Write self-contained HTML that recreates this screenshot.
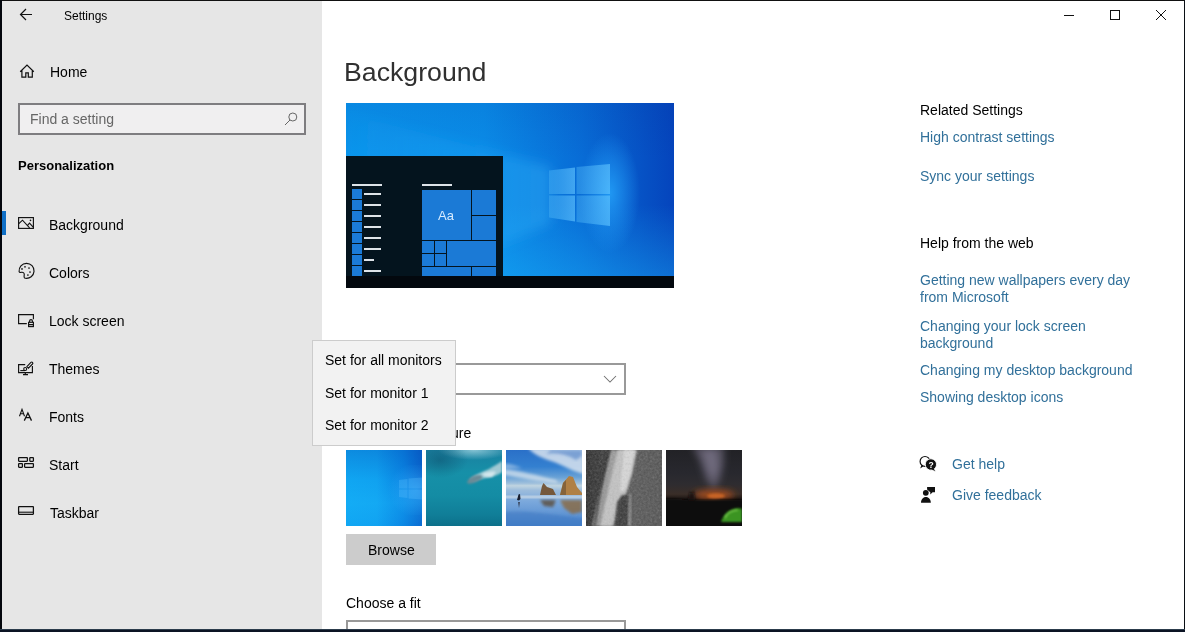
<!DOCTYPE html>
<html><head><meta charset="utf-8">
<style>
*{margin:0;padding:0;box-sizing:border-box}
html,body{width:1185px;height:632px;overflow:hidden;background:#fff}
body{position:relative;will-change:transform;font-family:"Liberation Sans",sans-serif;font-size:14px;color:#000}
.a{position:absolute}
.t{position:absolute;white-space:nowrap;line-height:20px;font-size:14px}
.lnk{color:#31709a}
svg{position:absolute;overflow:visible}
</style></head><body>
<!-- frame -->
<div class="a" style="left:0;top:0;width:1185px;height:632px;background:#fff"></div>
<!-- sidebar -->
<div class="a" style="left:2px;top:0;width:320px;height:632px;background:#e6e6e6"></div>

<!-- back arrow -->
<svg style="left:0;top:0" width="40" height="30"><path d="M20.5 14.5H32M26 9l-5.5 5.5L26 20" fill="none" stroke="#111" stroke-width="1.2"/></svg>
<div class="t" style="left:64px;top:6px;font-size:12px">Settings</div>

<!-- home -->
<svg style="left:0;top:0" width="40" height="90"><path d="M20.2 71.8L27 65.1L33.8 71.8M21.9 70.2V77.1H25.8V72.8H28.3V77.1H32.3V70.2" fill="none" stroke="#111" stroke-width="1.2"/></svg>
<div class="t" style="left:50px;top:62px">Home</div>

<!-- search -->
<div class="a" style="left:18px;top:103px;width:288px;height:32px;border:2px solid #7e7d80;background:#f0eff0"></div>
<div class="t" style="left:30px;top:109px;color:#666">Find a setting</div>
<svg style="left:0;top:0" width="320" height="140"><circle cx="292.8" cy="117" r="4" fill="none" stroke="#666" stroke-width="1"/><path d="M290 120L285 125" stroke="#666" stroke-width="1"/></svg>

<div class="t" style="left:18px;top:156px;font-size:13px;font-weight:bold">Personalization</div>

<!-- nav -->
<div class="a" style="left:2px;top:211px;width:4px;height:24px;background:#0f6fc6"></div>
<div class="t" style="left:49px;top:215px">Background</div>
<div class="t" style="left:49px;top:263px">Colors</div>
<div class="t" style="left:49px;top:311px">Lock screen</div>
<div class="t" style="left:49px;top:359px">Themes</div>
<div class="t" style="left:49px;top:407px">Fonts</div>
<div class="t" style="left:49px;top:455px">Start</div>
<div class="t" style="left:50px;top:503px">Taskbar</div>

<svg style="left:0;top:0" width="40" height="632" fill="none" stroke="#111" stroke-width="1.15">
 <rect x="18.6" y="217.6" width="14.8" height="10.8"/>
 <path d="M18.8 223.6L22.5 220.2L29.6 227.8M27.4 225.6L29.5 223.2L33.2 227.2"/>
 <circle cx="30.5" cy="220.4" r="0.8" fill="#111" stroke="none"/>
 <path d="M19.1 271.6A7.5 7.5 0 1 1 25.3 278.2C24.2 278.2 23.9 276.8 24.2 275.2C24.6 273.4 23.6 272.1 21.6 272.3C20.6 272.4 19.4 273 19.1 271.6Z"/>
 <g fill="#111" stroke="none"><circle cx="25" cy="266.8" r="0.85"/><circle cx="29" cy="268" r="0.85"/><circle cx="22" cy="268.9" r="0.85"/><circle cx="30" cy="272" r="0.85"/><circle cx="27.9" cy="275" r="0.85"/></g>
 <path d="M26.8 323.6H18.6V314.6H33.4V319.2"/>
 <rect x="28.6" y="322.3" width="4.8" height="4.3"/>
 <path d="M29.6 322.3V321A1.4 1.4 0 0 1 32.4 321V322.3M28.6 324.6H33.4"/>
 <path d="M25.2 364.6H18.6V372.6H32.4V366M25.3 372.6V374.6M23 374.6H28"/>
 <path d="M26.9 366.6L30.9 362.4A1.1 1.1 0 0 1 32.5 364L28.4 368.1Z" stroke-width="1.1"/>
 <circle cx="25.2" cy="369" r="1.5" stroke-width="1.1"/><path d="M20.3 370.6H25.2" stroke-width="1.1"/>
 <path d="M19.5 416.3L22 409.4L24.5 416.3M20.6 413.8H23.4" stroke-width="1.1"/>
 <path d="M24.3 420.6L27.9 413L31.5 420.6M25.7 417.6H30.1" stroke-width="1.3"/>
 <rect x="18.6" y="457.6" width="8.8" height="3.7" rx="0.5" stroke-width="1.25"/>
 <rect x="29.8" y="457.6" width="3.6" height="3.7" rx="0.5" stroke-width="1.25"/>
 <rect x="18.6" y="463.6" width="3.8" height="3.7" rx="0.5" stroke-width="1.25"/>
 <rect x="24.6" y="463.6" width="8.8" height="3.7" rx="0.5" stroke-width="1.25"/>
 <rect x="18.6" y="506.6" width="14.8" height="7.7" rx="0.5" stroke-width="1.25"/>
 <path d="M18.6 512.2H33.4" stroke-width="1.1"/>
</svg>
<svg style="left:0;top:0" width="1185" height="632">
 <circle cx="925" cy="461.4" r="4.9" fill="none" stroke="#111" stroke-width="1.2"/>
 <path d="M921.6 464.6L920.2 468.6L923.6 466.2Z" fill="#111"/>
 <path d="M925.3 464.3A5.6 5.6 0 1 1 934.4 468.8L936 472L931.9 470.1A5.6 5.6 0 0 1 925.3 464.3Z" fill="#111" stroke="#fff" stroke-width="0.9"/>
 <text x="931" y="468" font-family="Liberation Sans" font-weight="bold" font-size="8.5" fill="#fff" text-anchor="middle">?</text>
 <circle cx="925.8" cy="492.8" r="2.9" fill="#111"/>
 <path d="M921 502.8C921 499.5 923 497 925.9 497C928.8 497 930.8 499.5 930.8 502.8Z" fill="#111"/>
 <path d="M927.1 487H935V492.3H932.6L930.3 494.6V492.3L927.1 489.4Z" fill="#111"/>
</svg>

<!-- main title -->
<div class="a" style="left:344px;top:54px;font-size:26.7px;line-height:36px;white-space:nowrap;color:#303030">Background</div>

<!-- preview -->
<div class="a" id="prev" style="left:346px;top:103px;width:328px;height:185px;overflow:hidden;background:linear-gradient(90deg,#0a94ec 0%,#0a8ce8 42%,#086cd6 72%,#0544bc 100%)">
 <div class="a" style="left:0;top:0;width:328px;height:185px;background:linear-gradient(180deg,rgba(0,40,140,0.10) 0%,rgba(0,40,140,0) 30%,rgba(30,190,255,0) 55%,rgba(30,190,255,0.4) 100%)"></div>
 <div class="a" style="left:0;top:0;width:328px;height:185px;background:radial-gradient(ellipse 30px 60px at 264px 90px,rgba(40,170,255,0.75),rgba(40,170,255,0) 100%)"></div>
 <svg style="left:0;top:0" width="328" height="185">
  <defs>
   <linearGradient id="beam2" x1="0" x2="1" y1="0" y2="0"><stop offset="0" stop-color="#30b8ff" stop-opacity="0.05"/><stop offset="0.6" stop-color="#30b8ff" stop-opacity="0.18"/><stop offset="1" stop-color="#40c0ff" stop-opacity="0.35"/></linearGradient>
   <linearGradient id="lg" x1="0" x2="1" y1="0" y2="0"><stop offset="0" stop-color="#48b0f4" stop-opacity="0.45"/><stop offset="1" stop-color="#60c4ff" stop-opacity="0.65"/></linearGradient>
   <filter id="bl"><feGaussianBlur stdDeviation="6"/></filter>
  </defs>
  <polygon points="205,64 205,120 60,185 0,185 0,10" fill="url(#beam2)" filter="url(#bl)"/>
  <polygon points="203,67.5 229,64.5 229,91 203,91" fill="url(#lg)"/>
  <polygon points="230.5,64 264,61 264,91 230.5,91" fill="url(#lg)"/>
  <polygon points="203,92.5 229,92.5 229,118.5 203,114.5" fill="url(#lg)"/>
  <polygon points="230.5,92.5 264,92.5 264,123 230.5,119" fill="url(#lg)"/>
 </svg>
 <!-- start menu -->
 <div class="a" style="left:0;top:53px;width:157px;height:132px;background:#04141e"></div>
 <div class="a" style="left:6px;top:81px;width:30px;height:2px;background:#dde3e8"></div>
 <div class="a" style="left:76px;top:81px;width:30px;height:2px;background:#dde3e8"></div>
 <div class="a" style="left:6px;top:86px;width:10px;height:87px;background:repeating-linear-gradient(180deg,#1b7ad6 0,#1b7ad6 10px,#04141e 10px,#04141e 11px)"></div>
 <div class="a" style="left:18px;top:90px;width:17px;height:2px;background:#dde3e8;box-shadow:0 11px 0 #dde3e8,0 22px 0 #dde3e8,0 33px 0 #dde3e8,0 44px 0 #dde3e8,0 55px 0 #dde3e8,0 77px 0 #dde3e8"></div>
 <div class="a" style="left:18px;top:156px;width:10px;height:2px;background:#dde3e8"></div>
 <!-- tiles -->
 <div class="a" style="left:76px;top:87px;width:74px;height:86px;background:#04141e"></div>
 <div class="a" style="left:76px;top:87px;width:49px;height:50px;background:#1b7ad6"></div>
 <div class="a" style="left:126px;top:87px;width:24px;height:25px;background:#1b7ad6"></div>
 <div class="a" style="left:126px;top:113px;width:24px;height:24px;background:#1b7ad6"></div>
 <div class="a" style="left:76px;top:138px;width:12px;height:12px;background:#1b7ad6"></div>
 <div class="a" style="left:89px;top:138px;width:11px;height:12px;background:#1b7ad6"></div>
 <div class="a" style="left:76px;top:151px;width:12px;height:12px;background:#1b7ad6"></div>
 <div class="a" style="left:89px;top:151px;width:11px;height:12px;background:#1b7ad6"></div>
 <div class="a" style="left:101px;top:138px;width:49px;height:25px;background:#1b7ad6"></div>
 <div class="a" style="left:76px;top:164px;width:49px;height:9px;background:#1b7ad6"></div>
 <div class="a" style="left:126px;top:164px;width:24px;height:9px;background:#1b7ad6"></div>
 <div class="a" style="left:92px;top:105px;font-size:13px;line-height:16px;color:#d8ecff">Aa</div>
 <!-- taskbar -->
 <div class="a" style="left:0;top:173px;width:328px;height:12px;background:#03080e"></div>
</div>

<!-- dropdown -->
<div class="a" style="left:346px;top:363px;width:280px;height:32px;border:2px solid #999"></div>
<svg style="left:0;top:0" width="640" height="400"><path d="M604 376l6 6 6-6" fill="none" stroke="#707070" stroke-width="1.05"/></svg>

<div class="t" style="left:346px;top:423px">Choose your picture</div>

<!-- thumbs -->
<div class="a" style="left:346px;top:450px;width:76px;height:76px;overflow:hidden;background:linear-gradient(90deg,#10a6f2 0%,#10a2f0 40%,#0a84e2 75%,#0a64cc 100%)">
 <div class="a" style="left:0;top:0;width:76px;height:76px;background:linear-gradient(180deg,rgba(0,60,170,0.25) 0%,rgba(0,60,170,0) 40%,rgba(30,190,255,0.25) 70%,rgba(20,170,250,0.1) 100%)"></div>
 <div class="a" style="left:40px;top:15px;width:50px;height:50px;background:radial-gradient(circle at 30px 25px,rgba(60,180,255,0.5),rgba(60,180,255,0) 70%)"></div>
 <svg style="left:0;top:0" width="76" height="76"><g fill="#5cc0ff" fill-opacity="0.3"><polygon points="53,30 61.5,29 61.5,38.5 53,38.5"/><polygon points="62.5,28.6 76,27.6 76,38.5 62.5,38.5"/><polygon points="53,39.5 61.5,39.5 61.5,48 53,47"/><polygon points="62.5,39.5 76,39.5 76,49.5 62.5,48.4"/></g></svg>
</div>
<div class="a" style="left:426px;top:450px;width:76px;height:76px;overflow:hidden;background:linear-gradient(180deg,#1a80a0 0%,#1690a8 30%,#148ca4 60%,#107e98 85%,#0c708a 100%)">
 <div class="a" style="left:0;top:0;width:76px;height:76px;background:radial-gradient(ellipse 36px 10px at 48px 0px,rgba(190,230,238,0.65),rgba(190,230,238,0) 100%)"></div>
 <div class="a" style="left:0;top:0;width:76px;height:76px;background:radial-gradient(ellipse 28px 18px at 14px 10px,rgba(8,60,90,0.4),rgba(8,60,90,0) 100%)"></div>
 <svg style="left:0;top:0" width="76" height="76"><defs><filter id="b2" x="-20%" y="-20%" width="140%" height="140%"><feGaussianBlur stdDeviation="1.3"/></filter></defs>
  <path d="M44 30C48 25 56 22 63 19C68 16 73 13 76 11V22C71 26 62 28 54 29C50 30 47 32 44 30Z" fill="#c0d8de" fill-opacity="0.8" filter="url(#b2)"/>
  <path d="M41 33C42 28 47 25 53 25C57 25 58 28 54 30C50 32 45 35 41 33Z" fill="#6a8a96" filter="url(#b2)"/>
  <path d="M56 24C60 22 66 21 70 22L66 27C62 27 58 27 56 24Z" fill="#e8f4f6" fill-opacity="0.7" filter="url(#b2)"/>
 </svg>
</div>
<div class="a" style="left:506px;top:450px;width:76px;height:76px;overflow:hidden;background:linear-gradient(180deg,#2a70c8 0%,#3480d0 22%,#6aa2d6 36%,#a0c0dc 44%,#c0d4e0 47%,#9cbcdc 53%,#7aa8dc 68%,#4a84cc 100%)">
 <svg style="left:0;top:0" width="76" height="76"><defs><filter id="b3" x="-20%" y="-20%" width="140%" height="140%"><feGaussianBlur stdDeviation="1.8"/></filter><filter id="b3s"><feGaussianBlur stdDeviation="0.6"/></filter></defs>
  <path d="M22 -2H78V24C68 22 58 16 48 12C38 9 28 5 22 -2Z" fill="#e4eaf0" fill-opacity="0.8" filter="url(#b3)"/>
  <path d="M40 4C50 2 60 4 70 10L76 6V0H45Z" fill="#3a70c0" fill-opacity="0.5" filter="url(#b3)"/>
  <path d="M-2 19C15 21 30 25 50 30L52 33C30 31 15 28 -2 25Z" fill="#e0e8f0" fill-opacity="0.7" filter="url(#b3)"/>
  <path d="M-2 14C4 13 10 16 16 18L-2 19Z" fill="#d0e0f0" fill-opacity="0.5" filter="url(#b3)"/>
  <path d="M34 45L36 36L37.5 33L41 37L47 39L50 45Z" fill="#74583a" filter="url(#b3s)"/>
  <path d="M54 45L57 33L63 26L67 27L71 37L76 43V45ZM58 45C59.5 42 61 42 62 45Z" fill="#b08044" filter="url(#b3s)"/><path d="M54 45L57 33L60 30L60 45Z" fill="#6a5034" fill-opacity="0.6" filter="url(#b3s)"/>
  <path d="M34 50L50 50L47 57L38 56Z" fill="#5a4a3a" fill-opacity="0.8" filter="url(#b3)"/>
  <path d="M54 50L76 50L76 62L66 64L58 58Z" fill="#8a6840" fill-opacity="0.8" filter="url(#b3)"/>
  <path d="M0 45.5H76V48.5H0Z" fill="#d8e2ea" fill-opacity="0.55" filter="url(#b3s)"/>
  <path d="M12.5 44.5L14 44L14.5 49L13 50.5L11 50Z" fill="#1a2030"/>
  <path d="M12 52L14 52L13 58Z" fill="#2a3040" fill-opacity="0.8"/>
  <path d="M-2 62C20 60 40 64 78 68V78H-2Z" fill="#3a74c0" fill-opacity="0.5" filter="url(#b3)"/>
 </svg>
</div>
<div class="a" style="left:586px;top:450px;width:76px;height:76px;overflow:hidden;background:linear-gradient(90deg,#2a2a2a 0%,#333 20%,#444 45%,#555 60%,#505050 100%)">
 <svg style="left:0;top:0" width="76" height="76"><defs><filter id="b4" x="-10%" y="-10%" width="120%" height="120%"><feGaussianBlur stdDeviation="0.9"/></filter>
  <filter id="n4" x="0" y="0" width="100%" height="100%"><feTurbulence type="fractalNoise" baseFrequency="0.45" numOctaves="2" seed="5"/><feColorMatrix type="saturate" values="0"/><feComponentTransfer><feFuncA type="table" tableValues="0 0.3"/></feComponentTransfer></filter></defs>
  <path d="M25 0H51L46 25L40 45L33 60L28 76H6L12 50L20 20Z" fill="#9a9a9a" filter="url(#b4)"/>
  <path d="M32 0H50L45 25L39 44L31 58L26 76H14L20 50L27 20Z" fill="#c2c2c2" filter="url(#b4)"/>
  <path d="M38 0H49L44 24L39 40L34 42L36 20Z" fill="#d8d8d8" filter="url(#b4)"/>
  <path d="M29 76L31 52L36 45L43 45L42 76Z" fill="#363636" filter="url(#b4)"/>
  <path d="M43 45L45 42L45 76H42Z" fill="#8a8a8a" filter="url(#b4)"/>
  <path d="M21 0H24L16 40L10 76H7L13 40Z" fill="#2a2a2a" fill-opacity="0.7" filter="url(#b4)"/>
  <path d="M23 10L26 0L20 40L14 76H12L18 40Z" fill="#888" fill-opacity="0.6" filter="url(#b4)"/>
  <rect x="0" y="0" width="76" height="76" filter="url(#n4)"/>
 </svg>
</div>
<div class="a" style="left:666px;top:450px;width:76px;height:76px;overflow:hidden;background:linear-gradient(180deg,#222226 0%,#28282e 30%,#2e2c30 45%,#3a2e28 58%,#1a1412 65%,#0c0a0a 72%,#0a0a0a 100%)">
 <svg style="left:0;top:0" width="76" height="76"><defs><filter id="b5" x="-50%" y="-50%" width="200%" height="200%"><feGaussianBlur stdDeviation="3.5"/></filter><filter id="b5s" x="-20%" y="-20%" width="140%" height="140%"><feGaussianBlur stdDeviation="1"/></filter></defs>
  <path d="M26 -4H58L58 14L54 30L48 40L40 30L34 12Z" fill="#746e84" fill-opacity="0.6" filter="url(#b5)"/>
  <path d="M36 0H50L52 16L48 30L42 20Z" fill="#8a849a" fill-opacity="0.5" filter="url(#b5)"/>
  <ellipse cx="48" cy="45" rx="20" ry="5" fill="#b85420" fill-opacity="0.85" filter="url(#b5)"/>
  <ellipse cx="50" cy="46" rx="9" ry="2.5" fill="#e07028" fill-opacity="0.7" filter="url(#b5s)"/>
  <path d="M-2 49C10 48 20 50 40 50C55 50 65 49 78 50V78H-2Z" fill="#0b0909" filter="url(#b5s)"/>
  <path d="M22 50L24 41L26 44L28 40L29 50Z" fill="#141212" fill-opacity="0.85" filter="url(#b5s)"/>
  <path d="M55 72C57 65 62 60 69 58.5C73 58 76 59 76 59V72Z" fill="#3a9424" filter="url(#b5s)"/>
  <path d="M59 68C61 63 66 60.5 72 60" stroke="#8ad85a" stroke-width="1.2" fill="none" filter="url(#b5s)"/>
 </svg>
</div>
<div class="a" style="left:346px;top:534px;width:90px;height:31px;background:#ccc"></div>
<div class="t" style="left:368px;top:540px">Browse</div>

<div class="t" style="left:346px;top:593px">Choose a fit</div>
<div class="a" style="left:346px;top:620px;width:280px;height:31px;border:2px solid #999"></div>

<!-- popup -->
<div class="a" style="left:312px;top:340px;width:144px;height:106px;border:1px solid #ccc;background:#f2f2f2"></div>
<div class="t" style="left:325px;top:350px">Set for all monitors</div>
<div class="t" style="left:325px;top:383px">Set for monitor 1</div>
<div class="t" style="left:325px;top:415px">Set for monitor 2</div>

<!-- right -->
<div class="t" style="left:920px;top:100px">Related Settings</div>
<div class="t lnk" style="left:920px;top:127px">High contrast settings</div>
<div class="t lnk" style="left:920px;top:166px">Sync your settings</div>
<div class="t" style="left:920px;top:233px">Help from the web</div>
<div class="t lnk" style="left:920px;top:270px">Getting new wallpapers every day</div>
<div class="t lnk" style="left:920px;top:287px">from Microsoft</div>
<div class="t lnk" style="left:920px;top:316px">Changing your lock screen</div>
<div class="t lnk" style="left:920px;top:333px">background</div>
<div class="t lnk" style="left:920px;top:360px">Changing my desktop background</div>
<div class="t lnk" style="left:920px;top:387px">Showing desktop icons</div>
<div class="t lnk" style="left:952px;top:454px">Get help</div>
<div class="t lnk" style="left:952px;top:485px">Give feedback</div>

<!-- window controls -->
<svg style="left:0;top:0" width="1185" height="40" fill="none" stroke="#111" stroke-width="1">
 <path d="M1064 15.5h10"/>
 <rect x="1110.5" y="10.5" width="9" height="9"/>
 <path d="M1156 10l10 10M1166 10l-10 10"/>
</svg>

<!-- borders -->
<div class="a" style="left:0;top:0;width:1185px;height:1px;background:#111"></div>
<div class="a" style="left:0;top:0;width:2px;height:632px;background:#04070d"></div>
<div class="a" style="left:1184px;top:0;width:1px;height:632px;background:#0a0f14"></div>
<div class="a" style="left:0;top:629px;width:1185px;height:3px;background:linear-gradient(180deg,#2c3c4c 0,#2c3c4c 1px,#0c1424 1px)"></div>
</body></html>
